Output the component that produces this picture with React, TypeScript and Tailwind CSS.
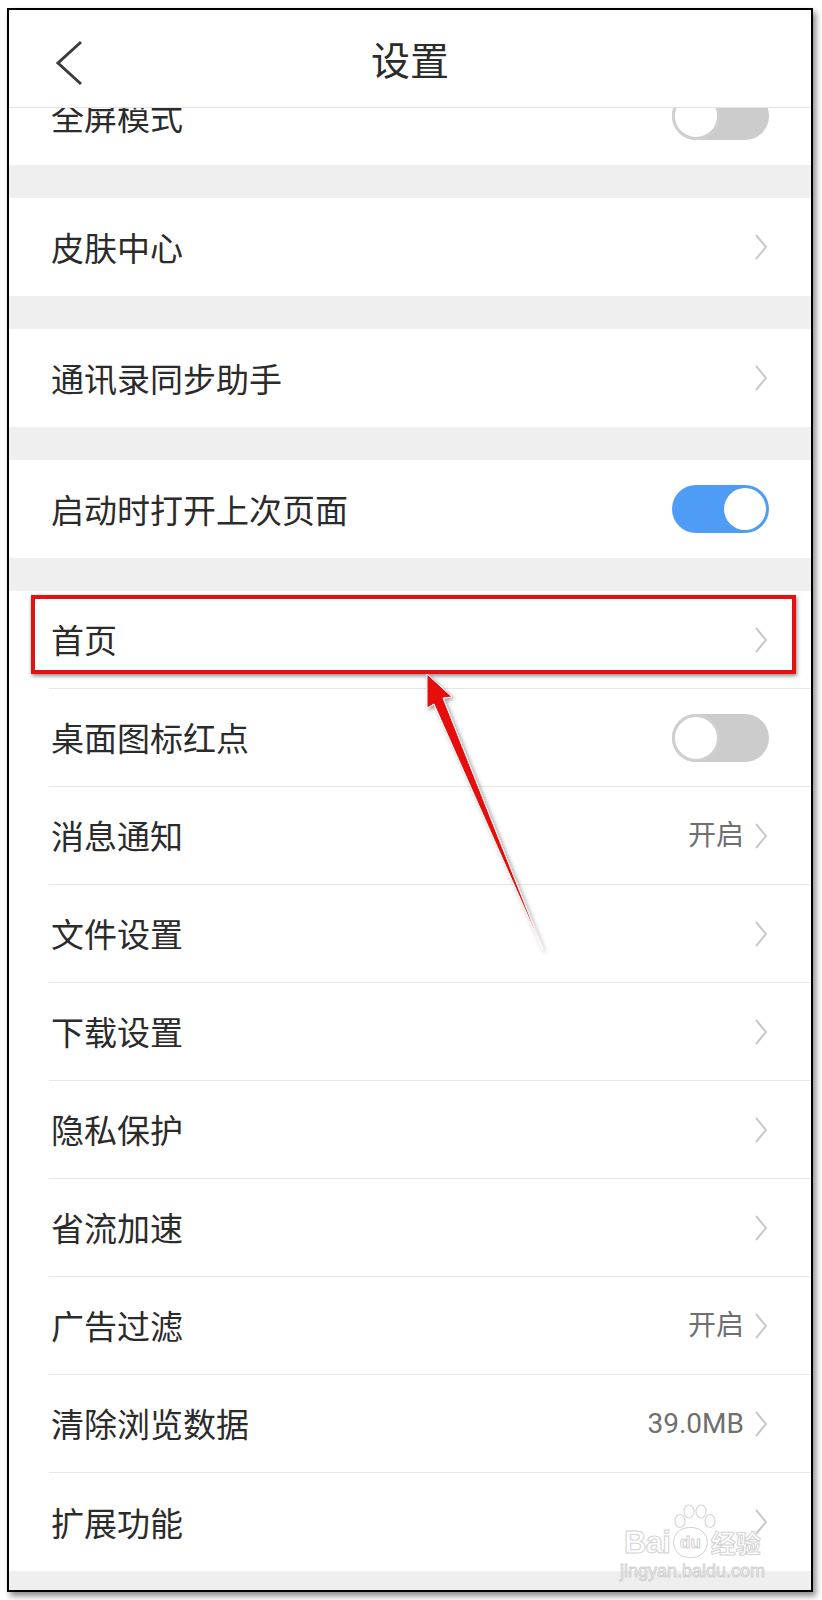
import React from "react";

const FONT = { fontFamily: '"Noto Sans CJK SC", "Noto Sans", sans-serif' };
const VALUE_FONT = { fontFamily: 'Roboto, "Noto Sans CJK SC", sans-serif' };
const LATIN = { fontFamily: '"Liberation Sans", Arial, sans-serif' };

type Row = {
  label: string;
  kind: "arrow" | "toggle-on" | "toggle-off";
  value?: string;
};

const mainRows: Row[] = [
  { label: "首页", kind: "arrow" },
  { label: "桌面图标红点", kind: "toggle-off" },
  { label: "消息通知", kind: "arrow", value: "开启" },
  { label: "文件设置", kind: "arrow" },
  { label: "下载设置", kind: "arrow" },
  { label: "隐私保护", kind: "arrow" },
  { label: "省流加速", kind: "arrow" },
  { label: "广告过滤", kind: "arrow", value: "开启" },
  { label: "清除浏览数据", kind: "arrow", value: "39.0MB" },
  { label: "扩展功能", kind: "arrow" },
];

function Chevron() {
  return (
    <svg width="14" height="28" viewBox="0 0 14 28" className="shrink-0">
      <polyline
        points="2,2 12,14 2,26"
        fill="none"
        stroke="#c9c9c9"
        strokeWidth="2"
      />
    </svg>
  );
}

function Toggle({ on }: { on: boolean }) {
  if (on) {
    return (
      <div className="w-[97px] h-[48px] rounded-full bg-[#4f9cf6] flex items-center justify-end pr-[3px]">
        <div className="w-[42px] h-[42px] rounded-full bg-white" />
      </div>
    );
  }
  return (
    <div className="w-[97px] h-[48px] rounded-full bg-[#cccccc] flex items-center">
      <div className="w-[48px] h-[48px] rounded-full bg-white border-[3px] border-[#cfcfcf]" />
    </div>
  );
}

function SettingRow({ row, divider }: { row: Row; divider?: boolean }) {
  return (
    <div className="h-[98px] bg-white pl-[40px] flex flex-col shrink-0">
      <div
        className={
          "flex-1 flex items-center pr-[43px] " +
          (divider ? "border-b border-[#e6e6e6]" : "")
        }
      >
        <span className="text-[33px] text-[#2b2b2b] pl-[2px] flex-1 leading-none">
          {row.label}
        </span>
        {row.kind === "arrow" && (
          <div className="flex items-center gap-[10px]">
            {row.value && (
              <span className="text-[28px] text-[#6f6f6f] leading-none" style={VALUE_FONT}>
                {row.value}
              </span>
            )}
            <Chevron />
          </div>
        )}
        {row.kind === "toggle-on" && (
          <div className="-mr-[1px]">
            <Toggle on />
          </div>
        )}
        {row.kind === "toggle-off" && (
          <div className="-mr-[1px]">
            <Toggle on={false} />
          </div>
        )}
      </div>
    </div>
  );
}

function Gap() {
  return <div className="h-[33px] bg-[#efefef] shrink-0" />;
}

function Watermark() {
  const outline = "text-transparent [-webkit-text-stroke:1px_#d2d2d2]";
  return (
    <div className="absolute right-[46px] bottom-[10px] flex flex-col items-center pointer-events-none">
      <svg width="44" height="28" viewBox="0 0 44 28" className="-mb-[5px] ml-[6px]">
        <g fill="none" stroke="#d6d6d6" strokeWidth="1.2">
          <ellipse cx="7" cy="17" rx="5" ry="6.5" />
          <ellipse cx="16" cy="7.5" rx="5" ry="6.5" />
          <ellipse cx="28" cy="7.5" rx="5" ry="6.5" />
          <ellipse cx="37" cy="17" rx="5" ry="6.5" />
        </g>
      </svg>
      <div className="flex items-center gap-[3px] leading-none">
        <span className={"text-[31px] font-bold tracking-tight " + outline} style={LATIN}>
          Bai
        </span>
        <span
          className="text-[17px] font-bold rounded-full border border-[#d2d2d2] px-[6px] py-[6px] text-transparent [-webkit-text-stroke:1px_#d2d2d2]"
          style={LATIN}
        >
          du
        </span>
        <span className={"text-[25px] font-bold " + outline} style={FONT}>
          经验
        </span>
      </div>
      <span className={"text-[18px] leading-none mt-[4px] " + outline} style={LATIN}>
        jingyan.baidu.com
      </span>
    </div>
  );
}

export default function App() {
  return (
    <div className="relative w-[822px] h-[1600px] bg-white" style={FONT}>
      <div className="pt-[8px] pl-[7px]">
        <div className="relative w-[806px] h-[1584px] border-2 border-black shadow-[3px_4px_6px_rgba(0,0,0,0.45)] bg-[#efefef] flex flex-col overflow-hidden">
          {/* header */}
          <div className="relative h-[98px] bg-white border-b border-[#e4e4e4] flex items-center justify-center shrink-0 z-10">
            <svg
              width="30"
              height="46"
              viewBox="0 0 30 46"
              className="absolute left-[45px] top-[30px]"
            >
              <polyline
                points="27,2 4,23 27,44"
                fill="none"
                stroke="#3c3c3c"
                strokeWidth="3"
              />
            </svg>
            <span className="text-[39px] text-[#2b2b2b] leading-none">
              设置
            </span>
          </div>

          {/* list */}
          <div className="flex-1 overflow-hidden flex flex-col">
            <div className="-mt-[41px] flex flex-col">
              <SettingRow row={{ label: "全屏模式", kind: "toggle-off" }} />
              <Gap />
              <SettingRow row={{ label: "皮肤中心", kind: "arrow" }} />
              <Gap />
              <SettingRow row={{ label: "通讯录同步助手", kind: "arrow" }} />
              <Gap />
              <SettingRow row={{ label: "启动时打开上次页面", kind: "toggle-on" }} />
              <Gap />
              {mainRows.map((r, i) => (
                <SettingRow key={r.label} row={r} divider={i < mainRows.length - 1} />
              ))}
            </div>
          </div>

          <Watermark />
        </div>
      </div>

      {/* annotation: red box */}
      <div className="absolute left-[31px] top-[595px] w-[765px] h-[79px] border-4 border-[#e01212] shadow-[1px_2px_4px_rgba(0,0,0,0.45)]" />

      {/* annotation: red arrow */}
      <svg
        width="822"
        height="1600"
        viewBox="0 0 822 1600"
        className="absolute left-0 top-0 pointer-events-none"
      >
        <defs>
          <filter id="sh" x="-20%" y="-20%" width="140%" height="140%">
            <feDropShadow dx="2" dy="2" stdDeviation="2" floodColor="#000" floodOpacity="0.4" />
          </filter>
        </defs>
        <polygon
          points="427,674 452,697 443,698 543,950 434,704 427,708"
          fill="#e60c0c"
          stroke="#ffffff"
          strokeWidth="1"
          strokeLinejoin="round"
          filter="url(#sh)"
        />
      </svg>
    </div>
  );
}
